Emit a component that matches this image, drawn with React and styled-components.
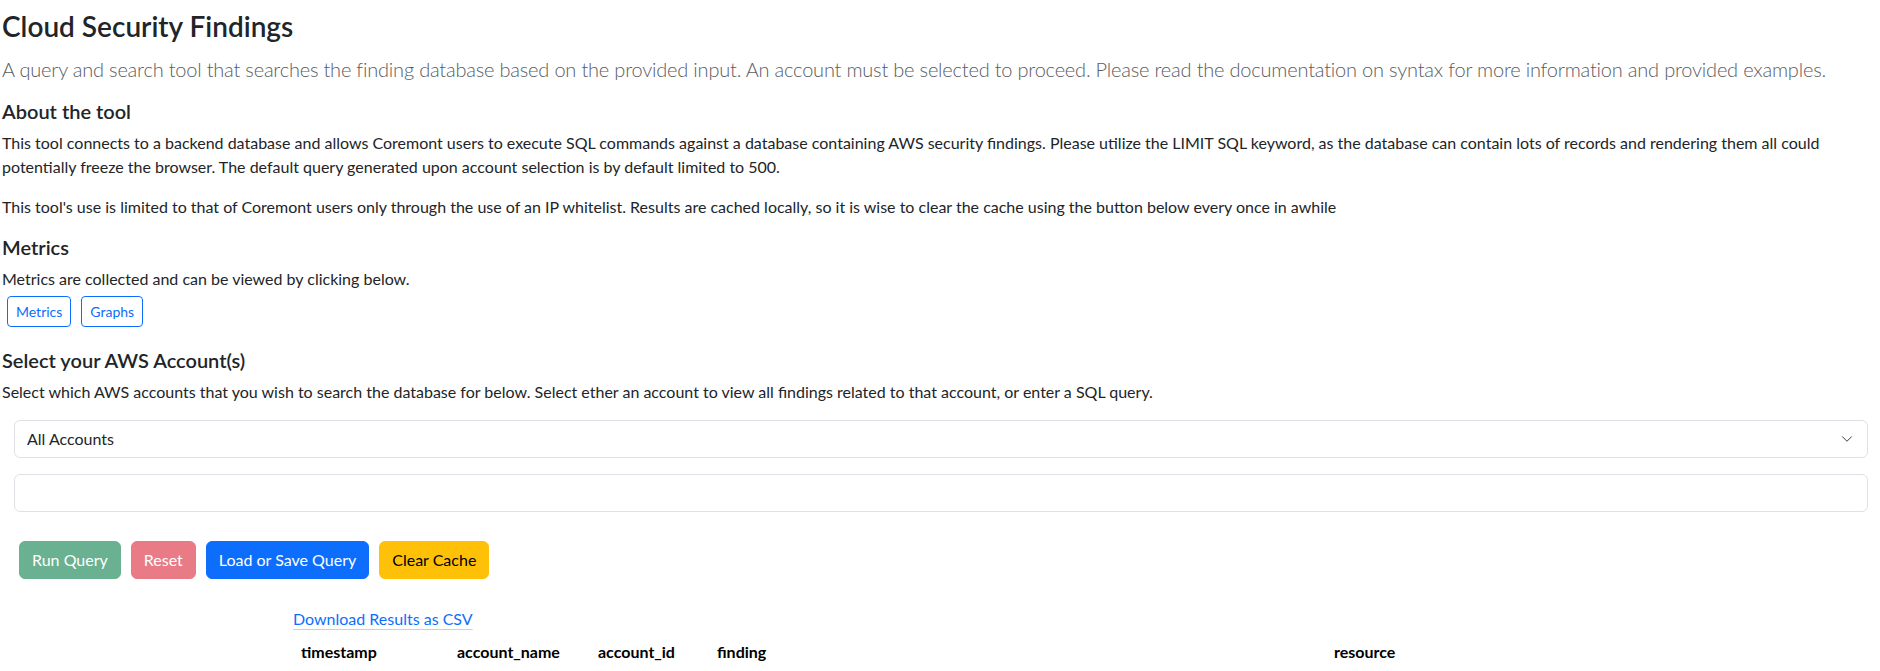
import React from "react";
import styled, { createGlobalStyle } from "styled-components";

const GlobalStyle = createGlobalStyle`
  body {
    margin: 0;
    background: #fff;
    color: #212529;
    font-family: Lato, "Liberation Sans", sans-serif;
    font-size: 16px;
    line-height: 1.5;
  }
  * { box-sizing: border-box; }
`;

const columns = [
  { name: "timestamp", width: 156 },
  { name: "account_name", width: 141 },
  { name: "account_id", width: 119 },
  { name: "finding", width: 617 },
  { name: "resource", width: 300 },
];

class App extends React.Component {
  state = {
    account: "All Accounts",
    query: "",
  };

  render() {
    return (
      <>
        <GlobalStyle />
        <Page>
          <Title>Cloud Security Findings</Title>
          <Lead>
            A query and search tool that searches the finding database based on the provided input. An account
            must be selected to proceed. Please read the documentation on syntax for more information and provided
            examples.
          </Lead>

          <SectionTitle $top={15}>About the tool</SectionTitle>
          <Text>
            This tool connects to a backend database and allows Coremont users to execute SQL commands against a
            database containing AWS security findings. Please utilize the LIMIT SQL keyword, as the database can
            contain lots of records and rendering them all could potentially freeze the browser. The default query
            generated upon account selection is by default limited to 500.
          </Text>
          <Text $bottom={16}>
            This tool's use is limited to that of Coremont users only through the use of an IP whitelist. Results
            are cached locally, so it is wise to clear the cache using the button below every once in awhile
          </Text>

          <SectionTitle $top={0}>Metrics</SectionTitle>
          <Text $bottom={5}>Metrics are collected and can be viewed by clicking below.</Text>
          <SmallRow>
            <OutlineButton type="button">Metrics</OutlineButton>
            <OutlineButton type="button">Graphs</OutlineButton>
          </SmallRow>

          <SectionTitle $top={21}>Select your AWS Account(s)</SectionTitle>
          <Text $bottom={16}>
            Select which AWS accounts that you wish to search the database for below. Select ether an account to
            view all findings related to that account, or enter a SQL query.
          </Text>

          <SelectWrap>
            <Select
              value={this.state.account}
              onChange={(e) => this.setState({ account: e.target.value })}
            >
              <option>All Accounts</option>
            </Select>
            <Chevron viewBox="0 0 16 16" width="16" height="12">
              <path d="m2 5 6 6 6-6" fill="none" stroke="#343a40" strokeWidth="1.3" strokeLinecap="round" strokeLinejoin="round" />
            </Chevron>
          </SelectWrap>
          <QueryInput
            type="text"
            value={this.state.query}
            onChange={(e) => this.setState({ query: e.target.value })}
          />

          <ActionRow>
            <ActionButton type="button" $bg="#69b190" $color="#fff">Run Query</ActionButton>
            <ActionButton type="button" $bg="#e87b86" $color="#fff">Reset</ActionButton>
            <ActionButton type="button" $bg="#0d6efd" $color="#fff">Load or Save Query</ActionButton>
            <ActionButton type="button" $bg="#ffc107" $color="#000">Clear Cache</ActionButton>
          </ActionRow>

          <Results>
            <DownloadLink href="#">Download Results as CSV</DownloadLink>
            <Table>
              <thead>
                <tr>
                  {columns.map((col) => (
                    <HeadCell key={col.name} style={{ width: col.width + "px" }}>
                      {col.name}
                    </HeadCell>
                  ))}
                </tr>
              </thead>
            </Table>
          </Results>
        </Page>
      </>
    );
  }
}

const Page = styled.div`
  padding: 10px 2px 0 2px;
  display: flex;
  flex-direction: column;
  align-items: stretch;
`;

const Title = styled.h3`
  margin: 0;
  font-size: 28px;
  font-weight: 600;
  line-height: 1.2;
  color: #212529;
`;

const Lead = styled.p`
  margin: 10px 0 0;
  font-size: 20px;
  font-weight: 300;
  line-height: 1.5;
  letter-spacing: -0.2px;
  color: #595c5f;
`;

const SectionTitle = styled.h5`
  margin: ${(p) => (p.$top !== undefined ? p.$top : 16)}px 0 8px;
  font-size: 20px;
  font-weight: 600;
  line-height: 1.2;
  color: #212529;
`;

const Text = styled.p`
  margin: 0 0 ${(p) => (p.$bottom !== undefined ? p.$bottom : 16)}px;
  font-size: 16px;
  line-height: 24px;
  color: #212529;
`;

const SmallRow = styled.div`
  display: flex;
  gap: 10px;
  padding-left: 5px;
`;

const OutlineButton = styled.button`
  font-family: inherit;
  font-size: 14px;
  line-height: 21px;
  padding: 4px 8px;
  border: 1px solid #0d6efd;
  border-radius: 4px;
  background: #fff;
  color: #0d6efd;
  cursor: pointer;
`;

const SelectWrap = styled.div`
  position: relative;
  margin: 0 10px 16px 12px;
`;

const Select = styled.select`
  display: block;
  width: 100%;
  height: 38px;
  padding: 6px 36px 6px 12px;
  font-family: inherit;
  font-size: 16px;
  line-height: 24px;
  color: #212529;
  background: #fff;
  border: 1px solid #dee2e6;
  border-radius: 6px;
  appearance: none;
  -webkit-appearance: none;
  outline: none;
`;

const Chevron = styled.svg`
  position: absolute;
  right: 13px;
  top: 13px;
  pointer-events: none;
`;

const QueryInput = styled.input`
  display: block;
  height: 38px;
  margin: 0 10px 0 12px;
  padding: 6px 12px;
  font-family: inherit;
  font-size: 16px;
  color: #212529;
  background: #fff;
  border: 1px solid #dee2e6;
  border-radius: 6px;
  outline: none;
`;

const ActionRow = styled.div`
  display: flex;
  gap: 10px;
  margin: 29px 0 0 17px;
`;

const ActionButton = styled.button`
  font-family: inherit;
  font-size: 16px;
  line-height: 24px;
  padding: 6px 12px;
  border: 1px solid ${(p) => p.$bg};
  border-radius: 6px;
  background: ${(p) => p.$bg};
  color: ${(p) => p.$color};
  cursor: pointer;
`;

const Results = styled.div`
  margin: 28px 0 0 291px;
  display: flex;
  flex-direction: column;
  align-items: flex-start;
`;

const DownloadLink = styled.a`
  font-size: 16px;
  line-height: 24px;
  color: #0d6efd;
  text-decoration: underline;
  text-decoration-color: rgba(13, 110, 253, 0.3);
  text-underline-offset: 4px;
`;

const Table = styled.table`
  margin-top: 1px;
  border-collapse: collapse;
  table-layout: fixed;
`;

const HeadCell = styled.th`
  padding: 8px;
  text-align: left;
  font-size: 16px;
  font-weight: 700;
  line-height: 24px;
  color: #000;
`;

export default App;
